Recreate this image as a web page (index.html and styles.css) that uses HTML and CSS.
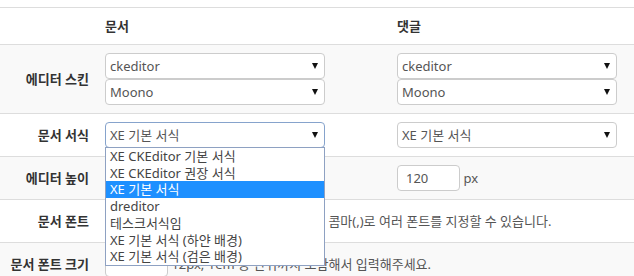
FILE: index.html
```html
<!DOCTYPE html>
<html lang="ko">

<head>
    <meta charset="UTF-8">
    <link rel="stylesheet" href="styles.css">
</head>

<body>
    <div class="config">
        <table class="form-table">
            <colgroup>
                <col class="col-label">
                <col class="col-doc">
                <col>
            </colgroup>
            <thead>
                <tr>
                    <th></th>
                    <th class="head">문서</th>
                    <th class="head">댓글</th>
                </tr>
            </thead>
            <tbody>
                <tr>
                    <th>에디터 스킨</th>
                    <td>
                        <div class="select">ckeditor<span class="arrow"></span></div>
                        <div class="select">Moono<span class="arrow"></span></div>
                    </td>
                    <td>
                        <div class="select">ckeditor<span class="arrow"></span></div>
                        <div class="select">Moono<span class="arrow"></span></div>
                    </td>
                </tr>
                <tr>
                    <th>문서 서식</th>
                    <td>
                        <div class="select-wrap">
                            <div class="select focus">XE 기본 서식<span class="arrow"></span></div>
                            <ul class="options">
                                <li>XE CKEditor 기본 서식</li>
                                <li>XE CKEditor 권장 서식</li>
                                <li class="selected">XE 기본 서식</li>
                                <li>dreditor</li>
                                <li>테스크서식임</li>
                                <li>XE 기본 서식 (하얀 배경)</li>
                                <li>XE 기본 서식 (검은 배경)</li>
                            </ul>
                        </div>
                    </td>
                    <td>
                        <div class="select">XE 기본 서식<span class="arrow"></span></div>
                    </td>
                </tr>
                <tr>
                    <th>에디터 높이</th>
                    <td><span class="input num"></span></td>
                    <td><span class="input num">120</span> <span class="unit">px</span></td>
                </tr>
                <tr>
                    <th>문서 폰트</th>
                    <td colspan="2"><span class="input wide"></span> <span class="help">콤마(,)로 여러 폰트를 지정할 수 있습니다.</span></td>
                </tr>
                <tr>
                    <th>문서 폰트 크기</th>
                    <td colspan="2"><span class="input num"></span> <span class="help">12px, 1em 등 단위까지 포함해서 입력해주세요.</span></td>
                </tr>
            </tbody>
        </table>
    </div>
</body>

</html>
```

FILE: styles.css
```css
body {
    margin: 0;
    background: #fff;
    font-family: "Noto Sans", "Noto Sans CJK KR", sans-serif;
    font-size: 13px;
    color: #333;
}

.config {
    padding-top: 7px;
    height: 276px;
    overflow: hidden;
}

.form-table {
    width: 100%;
    border-collapse: collapse;
    table-layout: fixed;
    border-top: 1px solid #ddd;
}

.col-label {
    width: 97px;
}

.col-doc {
    width: 292px;
}

.form-table th,
.form-table td {
    padding: 8px;
    border-bottom: 1px solid #ddd;
    vertical-align: middle;
    line-height: 20px;
}

.form-table th {
    text-align: right;
    font-weight: bold;
    white-space: nowrap;
}

.form-table th.head {
    text-align: left;
    height: 20px;
}

.form-table tbody tr:nth-child(odd) {
    background-color: #f9f9f9;
}

.select {
    width: 220px;
    height: 26px;
    box-sizing: border-box;
    border: 1px solid #ccc;
    border-radius: 4px;
    background: #fff;
    color: #555;
    padding: 0 6px 0 4px;
    display: flex;
    align-items: center;
    justify-content: space-between;
    line-height: 24px;
}

.select.focus {
    border-color: #86a3cc;
}

.arrow {
    width: 0;
    height: 0;
    border-left: 3.5px solid transparent;
    border-right: 3.5px solid transparent;
    border-top: 6px solid #111;
}

.select-wrap {
    position: relative;
    width: 220px;
}

.options {
    position: absolute;
    top: 25px;
    left: 0;
    width: 220px;
    box-sizing: border-box;
    margin: 0;
    padding: 0;
    list-style: none;
    background: #fff;
    border: 1px solid #8ea1c2;
    z-index: 10;
}

.options li {
    line-height: 16.7px;
    padding-left: 4px;
    color: #444;
    white-space: nowrap;
}

.options li.selected {
    background-color: #1e90ff;
    color: #fff;
}

.input {
    display: inline-block;
    vertical-align: middle;
    height: 26px;
    box-sizing: border-box;
    border: 1px solid #ccc;
    border-radius: 4px;
    background: #fff;
    color: #555;
    padding: 0 8px;
    line-height: 24px;
}

.input.num {
    width: 63px;
}

.input.wide {
    width: 220px;
}

.unit,
.help {
    color: #555;
    vertical-align: middle;
}
```
